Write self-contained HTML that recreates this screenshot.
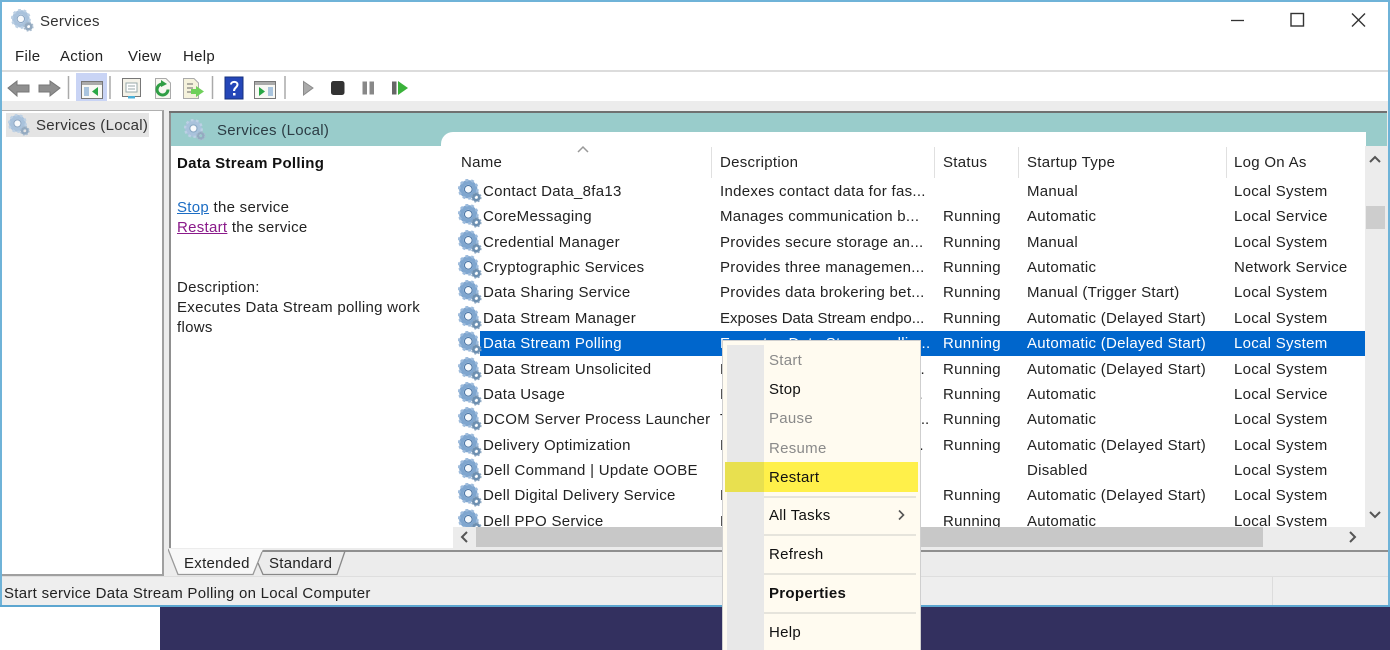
<!DOCTYPE html>
<html><head><meta charset="utf-8"><style>
html,body{margin:0;padding:0;width:1390px;height:650px;overflow:hidden;background:#fff}
body{position:relative;font-family:"Liberation Sans",sans-serif;font-size:15px;color:#222;letter-spacing:.29px;filter:blur(.3px)}
div,span,a,svg{position:absolute;white-space:nowrap}
.t{line-height:23px;height:23px}
.r{left:0;width:924px;height:25px}
.r span{top:0;line-height:28px}
.r svg{left:17px;top:1px}
.a{left:42px}.b{left:279px;width:212px;overflow:hidden}.c{left:502px}.d{left:586px}.e{left:793px}
.h{top:151px;line-height:23px}
.dv{top:147px;width:1px;height:31px;background:#e0e0e0}
.m{left:769px;line-height:23px}
.dis{color:#8a8a8a}
.sp{left:764px;width:152px;height:2px;background:#e6e4dc}
</style></head><body>
<svg width="0" height="0" style="left:0;top:0"><defs>
<g id="g">
<circle cx="9" cy="9" r="6" fill="none" stroke="#7fa6cf" stroke-width="4"/>
<circle cx="9" cy="9" r="8" fill="none" stroke="#9dbbdc" stroke-width="2.2" stroke-dasharray="2.5 2.5"/>
<circle cx="9" cy="9" r="3.4" fill="#f4f8fc" stroke="#4d78a8" stroke-width="1"/>
<circle cx="16" cy="16" r="2.6" fill="none" stroke="#6d8fb0" stroke-width="2.4"/>
<circle cx="16" cy="16" r="4" fill="none" stroke="#8aa6c2" stroke-width="1.3" stroke-dasharray="1.6 1.6"/>
</g>
<g id="gl">
<circle cx="9" cy="9" r="6" fill="none" stroke="#a9c2dc" stroke-width="4"/>
<circle cx="9" cy="9" r="8" fill="none" stroke="#bcd0e4" stroke-width="2.2" stroke-dasharray="2.5 2.5"/>
<circle cx="9" cy="9" r="3.4" fill="#f8fafc" stroke="#8aa6c4" stroke-width="1"/>
<circle cx="16" cy="16" r="2.6" fill="none" stroke="#94aac0" stroke-width="2.4"/>
<circle cx="16" cy="16" r="4" fill="none" stroke="#a8bccf" stroke-width="1.3" stroke-dasharray="1.6 1.6"/>
</g>
</defs></svg>

<!-- window frame -->
<div style="left:0;top:0;width:1390px;height:607px;background:#fff"></div>
<svg style="left:11px;top:9px" width="23" height="23" viewBox="0 0 21 21"><use href="#gl"/></svg>
<div class="t" style="left:40px;top:10px;color:#333">Services</div>
<svg style="left:1220px;top:8px" width="160" height="24" viewBox="0 0 160 24">
<path d="M11 12.500H24" stroke="#333" stroke-width="1.300"/>
<rect x="71" y="5.500" width="12.500" height="12.500" fill="none" stroke="#333" stroke-width="1.400"/>
<path d="M132 5.500L145 18.500M145 5.500L132 18.500" stroke="#333" stroke-width="1.400"/>
</svg>
<div class="t" style="left:15px;top:45px">File</div>
<div class="t" style="left:60px;top:45px">Action</div>
<div class="t" style="left:128px;top:45px">View</div>
<div class="t" style="left:183px;top:45px">Help</div>
<div style="left:2px;top:70px;width:1386px;height:2px;background:#dcdcdc"></div>

<!-- toolbar -->
<div style="left:76px;top:73px;width:31px;height:28px;background:#c9d4f5"></div>
<svg style="left:0;top:72px" width="420" height="30" viewBox="0 0 420 30">
<path d="M8 16L17 9V13H29V20H17V24Z" fill="#8f8f8f" stroke="#777"/>
<path d="M60 16L50 9V13H39V20H50V24Z" fill="#8f8f8f" stroke="#777"/>
<path d="M68.500 4V27M110 4V27M212.500 4V27M285 4V27" stroke="#aaa" stroke-width="1.500"/>
<g><rect x="81.500" y="9.500" width="21" height="17" fill="#f8f8f4" stroke="#777"/><rect x="82" y="10" width="20" height="3" fill="#aaa"/><path d="M98 15V24L92 19.500Z" fill="#28a745"/><rect x="84" y="15" width="5" height="9" fill="#a9c4de"/></g>
<g><rect x="122.500" y="6.500" width="18" height="18" fill="#f4f2e8" stroke="#777"/><rect x="126" y="11" width="11" height="9" fill="#fff" stroke="#9aa"/><path d="M128 14H135M128 17H135" stroke="#9aa"/><rect x="128" y="24" width="7" height="2.500" fill="#4cb0d8"/></g>
<g><path d="M155.500 6.500H166L170.500 11V26.500H155.500Z" fill="#f7f7f0" stroke="#aaa"/><path d="M168 17.500A5.500 5.500 0 1 1 163 12" fill="none" stroke="#2f9e44" stroke-width="3"/><path d="M161 8L167 12L161 15Z" fill="#2f9e44"/></g>
<g><path d="M183.500 6.500H194L198.500 11V26.500H183.500Z" fill="#f5f2dc" stroke="#aaa"/><path d="M187 12H193M187 16H193M187 20H193" stroke="#666"/><path d="M196 14L204 19.500L196 25V22H191V17H196Z" fill="#6fd05a"/></g>
<rect x="225" y="5" width="18" height="22" fill="#2446b8" stroke="#16307e"/>
<path d="M231 12.500C231 9 237.500 9 237.500 12.500C237.500 15.500 234 15.500 234 19" fill="none" stroke="#fff" stroke-width="2"/><rect x="233" y="21" width="2.500" height="2.500" fill="#fff"/>
<g><rect x="254.500" y="9.500" width="21" height="17" fill="#f8f8f4" stroke="#777"/><rect x="255" y="10" width="20" height="3" fill="#aaa"/><path d="M259 15V24L265 19.500Z" fill="#28a745"/><rect x="268" y="15" width="5" height="9" fill="#a9c4de"/></g>
<path d="M303.500 9.500L313 16L303.500 23Z" fill="#aaa" stroke="#8a8a8a"/>
<rect x="331" y="9" width="13.500" height="14" rx="2.500" fill="#333"/>
<rect x="362.500" y="9.500" width="4.500" height="13" fill="#888"/><rect x="369.500" y="9.500" width="4.500" height="13" fill="#888"/>
<rect x="392" y="9.500" width="4.500" height="13" fill="#666"/><path d="M398 9L408 16L398 23Z" fill="#3ab23a"/>
</svg>
<div style="left:2px;top:101px;width:1386px;height:10px;background:#ececec"></div>

<!-- left tree -->
<div style="left:2px;top:110px;width:162px;height:466px;background:#fff;border-right:2px solid #a0a0a0;border-bottom:2px solid #a0a0a0;border-top:1px solid #b0b0b0;box-sizing:border-box"></div>
<div style="left:6px;top:113px;width:143px;height:24px;background:#e4e4e4"></div>
<svg style="left:8px;top:114px" width="22" height="22" viewBox="0 0 21 21"><use href="#gl"/></svg>
<div class="t" style="left:36px;top:114px;color:#333">Services (Local)</div>
<div style="left:164px;top:110px;width:5px;height:466px;background:#ececec"></div>

<!-- right panel -->
<div style="left:169px;top:111px;width:1219px;height:2px;background:#707070"></div>
<div style="left:169px;top:113px;width:2px;height:436px;background:#909090"></div>
<div style="left:171px;top:113px;width:1216px;height:34px;background:#99cccb"></div>
<div style="left:1387px;top:111px;width:1px;height:495px;background:#ececec"></div>
<svg style="left:184px;top:119px" width="22" height="22" viewBox="0 0 21 21"><use href="#gl"/></svg>
<div class="t" style="left:217px;top:119px;color:#2c3c44">Services (Local)</div>
<div style="left:171px;top:146px;width:275px;height:402px;background:#fff"></div>
<div style="left:441px;top:132px;width:925px;height:396px;background:#fff;border-top-left-radius:12px"></div>
<div class="t" style="left:177px;top:152px;font-weight:bold;color:#111">Data Stream Polling</div>
<div class="t" style="left:177px;top:196px"><span style="position:static;color:#1c6dc4;text-decoration:underline">Stop</span> the service</div>
<div class="t" style="left:177px;top:216px"><span style="position:static;color:#8a1a8a;text-decoration:underline">Restart</span> the service</div>
<div class="t" style="left:177px;top:276px">Description:</div>
<div class="t" style="left:177px;top:296px">Executes Data Stream polling work</div>
<div class="t" style="left:177px;top:316px">flows</div>

<!-- list header -->
<div class="h" style="left:461px">Name</div>
<div class="h" style="left:720px">Description</div>
<div class="h" style="left:943px">Status</div>
<div class="h" style="left:1027px">Startup Type</div>
<div class="h" style="left:1234px">Log On As</div>
<div class="dv" style="left:711px"></div><div class="dv" style="left:934px"></div><div class="dv" style="left:1018px"></div><div class="dv" style="left:1226px"></div>
<svg style="left:576px;top:144px" width="14" height="10" viewBox="0 0 14 10"><path d="M2 8L7 3L12 8" fill="none" stroke="#999" stroke-width="1.500"/></svg>

<!-- rows -->
<div style="left:441px;top:178px;width:924px;height:349px;overflow:hidden">
<div style="left:39px;top:153px;width:885px;height:25px;background:#0066cc"></div>
<div class="r" style="top:0"><svg width="24" height="24" viewBox="0 0 21 21"><use href="#g"/></svg><span class="a">Contact Data_8fa13</span><span class="b">Indexes contact data for fas...</span><span class="d">Manual</span><span class="e">Local System</span></div>
<div class="r" style="top:25.400px"><svg width="24" height="24" viewBox="0 0 21 21"><use href="#g"/></svg><span class="a">CoreMessaging</span><span class="b">Manages communication b...</span><span class="c">Running</span><span class="d">Automatic</span><span class="e">Local Service</span></div>
<div class="r" style="top:50.700px"><svg width="24" height="24" viewBox="0 0 21 21"><use href="#g"/></svg><span class="a">Credential Manager</span><span class="b">Provides secure storage an...</span><span class="c">Running</span><span class="d">Manual</span><span class="e">Local System</span></div>
<div class="r" style="top:76.100px"><svg width="24" height="24" viewBox="0 0 21 21"><use href="#g"/></svg><span class="a">Cryptographic Services</span><span class="b">Provides three managemen...</span><span class="c">Running</span><span class="d">Automatic</span><span class="e">Network Service</span></div>
<div class="r" style="top:101.400px"><svg width="24" height="24" viewBox="0 0 21 21"><use href="#g"/></svg><span class="a">Data Sharing Service</span><span class="b">Provides data brokering bet...</span><span class="c">Running</span><span class="d">Manual (Trigger Start)</span><span class="e">Local System</span></div>
<div class="r" style="top:126.800px"><svg width="24" height="24" viewBox="0 0 21 21"><use href="#g"/></svg><span class="a">Data Stream Manager</span><span class="b" style="letter-spacing:0">Exposes Data Stream endpo...</span><span class="c">Running</span><span class="d">Automatic (Delayed Start)</span><span class="e">Local System</span></div>
<div class="r" style="top:152.100px;color:#fff"><svg width="24" height="24" viewBox="0 0 21 21"><use href="#g"/></svg><span class="a">Data Stream Polling</span><span class="b">Executes Data Stream pollin...</span><span class="c">Running</span><span class="d">Automatic (Delayed Start)</span><span class="e">Local System</span></div>
<div class="r" style="top:177.500px"><svg width="24" height="24" viewBox="0 0 21 21"><use href="#g"/></svg><span class="a">Data Stream Unsolicited</span><span class="b">Handles unsolicited data str...</span><span class="c">Running</span><span class="d">Automatic (Delayed Start)</span><span class="e">Local System</span></div>
<div class="r" style="top:202.800px"><svg width="24" height="24" viewBox="0 0 21 21"><use href="#g"/></svg><span class="a">Data Usage</span><span class="b">Network data usage, data li...</span><span class="c">Running</span><span class="d">Automatic</span><span class="e">Local Service</span></div>
<div class="r" style="top:228.200px"><svg width="24" height="24" viewBox="0 0 21 21"><use href="#g"/></svg><span class="a">DCOM Server Process Launcher</span><span class="b" style="letter-spacing:0">The DCOMLAUNCH service l...</span><span class="c">Running</span><span class="d">Automatic</span><span class="e">Local System</span></div>
<div class="r" style="top:253.500px"><svg width="24" height="24" viewBox="0 0 21 21"><use href="#g"/></svg><span class="a">Delivery Optimization</span><span class="b">Performs content delivery o...</span><span class="c">Running</span><span class="d">Automatic (Delayed Start)</span><span class="e">Local System</span></div>
<div class="r" style="top:278.900px"><svg width="24" height="24" viewBox="0 0 21 21"><use href="#g"/></svg><span class="a">Dell Command | Update OOBE</span><span class="d">Disabled</span><span class="e">Local System</span></div>
<div class="r" style="top:304.200px"><svg width="24" height="24" viewBox="0 0 21 21"><use href="#g"/></svg><span class="a">Dell Digital Delivery Service</span><span class="b">Dell Digital Delivery Servic.</span><span class="c">Running</span><span class="d">Automatic (Delayed Start)</span><span class="e">Local System</span></div>
<div class="r" style="top:329.600px"><svg width="24" height="24" viewBox="0 0 21 21"><use href="#g"/></svg><span class="a">Dell PPO Service</span><span class="b">Dell PPO Service</span><span class="c">Running</span><span class="d">Automatic</span><span class="e">Local System</span></div>
</div>

<!-- scrollbars -->
<div style="left:1365px;top:146px;width:22px;height:401px;background:#ececec"></div>
<div style="left:1366px;top:206px;width:19px;height:23px;background:#cdcdcd"></div>
<svg style="left:1367px;top:152px" width="16" height="14" viewBox="0 0 16 14"><path d="M3 10L8 5L13 10" fill="none" stroke="#555" stroke-width="2"/></svg>
<svg style="left:1367px;top:508px" width="16" height="14" viewBox="0 0 16 14"><path d="M3 4L8 9L13 4" fill="none" stroke="#555" stroke-width="2"/></svg>
<div style="left:453px;top:527px;width:934px;height:21px;background:#ececec"></div>
<div style="left:476px;top:527px;width:787px;height:20px;background:#c8c8c8"></div>
<svg style="left:457px;top:529px" width="14" height="16" viewBox="0 0 14 16"><path d="M10 3L5 8L10 13" fill="none" stroke="#555" stroke-width="2"/></svg>
<svg style="left:1346px;top:529px" width="14" height="16" viewBox="0 0 14 16"><path d="M4 3L9 8L4 13" fill="none" stroke="#555" stroke-width="2"/></svg>

<!-- tabs -->
<div style="left:169px;top:548px;width:1218px;height:28px;background:#ececec"></div>
<div style="left:171px;top:550px;width:1217px;height:2px;background:#8f8f8f"></div>
<svg style="left:168px;top:548px" width="185" height="29" viewBox="0 0 185 29">
<path d="M0 1H95L85 26.500H10Z" fill="#f8f8f8"/>
<path d="M0 1L10 26.500H85L94 4" fill="none" stroke="#999" stroke-width="1.300"/>
<path d="M90 15L95 26.500H169L177 3" fill="none" stroke="#888" stroke-width="1.300"/>
</svg>
<div class="t" style="left:184px;top:552px">Extended</div>
<div class="t" style="left:269px;top:552px">Standard</div>

<!-- status -->
<div style="left:2px;top:576px;width:1386px;height:29px;background:#eeeeee;border-top:1px solid #dedede"></div>
<div style="left:1272px;top:577px;width:1px;height:28px;background:#dcdcdc"></div>
<div class="t" style="left:4px;top:582px">Start service Data Stream Polling on Local Computer</div>
<!-- borders -->
<div style="left:0;top:0;width:1390px;height:2px;background:#6fb3d8"></div>
<div style="left:0;top:0;width:2px;height:607px;background:#6fb3d8"></div>
<div style="left:1388px;top:0;width:2px;height:607px;background:#6fb3d8"></div>
<div style="left:0;top:605px;width:1390px;height:2px;background:#5ca6d0"></div>
<div style="left:0;top:607px;width:160px;height:43px;background:#fff"></div>
<div style="left:160px;top:607px;width:1230px;height:43px;background:#33305f"></div>

<!-- context menu -->
<div style="left:723px;top:341px;width:197px;height:309px;background:#fffbf0;box-shadow:0 0 0 1px #cfcfcf"></div>
<div style="left:727px;top:345px;width:37px;height:305px;background:#e8e8e8"></div>
<div style="left:725px;top:462px;width:193px;height:30px;background:#fff04a"></div>
<div style="left:725px;top:462px;width:39px;height:30px;background:#e8e04f"></div>
<div class="m dis" style="top:349px">Start</div>
<div class="m" style="top:378px;color:#111">Stop</div>
<div class="m dis" style="top:407px">Pause</div>
<div class="m dis" style="top:437px">Resume</div>
<div class="m" style="top:466px;color:#111">Restart</div>
<div class="sp" style="top:496px"></div>
<div class="m" style="top:504px;color:#111">All Tasks</div>
<svg style="left:895px;top:508px" width="12" height="14" viewBox="0 0 12 14"><path d="M4 2.500L8.500 7L4 11.500" fill="none" stroke="#555" stroke-width="1.600"/></svg>
<div class="sp" style="top:534px"></div>
<div class="m" style="top:543px;color:#111">Refresh</div>
<div class="sp" style="top:573px"></div>
<div class="m" style="top:582px;color:#111;font-weight:bold">Properties</div>
<div class="sp" style="top:612px"></div>
<div class="m" style="top:621px;color:#111">Help</div>
</body></html>
